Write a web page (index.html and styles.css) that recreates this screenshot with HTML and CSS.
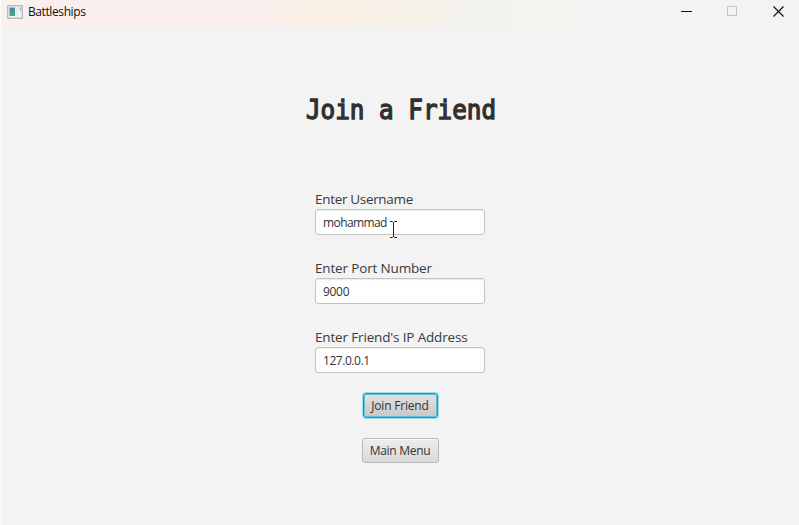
FILE: index.html
```
<!DOCTYPE html>
<html lang="en">
<head>
<meta charset="utf-8">
<title>Battleships</title>
<link rel="stylesheet" href="styles.css">
</head>
<body>
<div class="window">
  <header class="titlebar">
    <svg class="app-icon" width="16" height="14" viewBox="0 0 16 14">
      <defs><linearGradient id="g" x1="0" y1="0" x2="0" y2="1"><stop offset="0" stop-color="#4a87a8"/><stop offset="1" stop-color="#4fa583"/></linearGradient></defs>
      <rect x=".75" y=".75" width="14.5" height="12.5" fill="#f4f8f8" stroke="#aeb5ba" stroke-width="1.3"/>
      <rect x="2.5" y="2.5" width="5.5" height="8.5" fill="url(#g)"/>
      <rect x="8.5" y="2.5" width="3" height="9" fill="#e2ebed"/>
      <path d="M12 2.5h2v5z" fill="#8fc1bd"/>
    </svg>
    <span class="title">Battleships</span>
    <div class="controls">
      <svg width="11" height="11" viewBox="0 0 11 11"><path d="M0 5.5h11" stroke="#111"/></svg>
      <svg width="11" height="11" viewBox="0 0 11 11"><rect x=".5" y=".5" width="9" height="9" rx=".5" fill="none" stroke="#c4c4c4"/></svg>
      <svg width="11" height="11" viewBox="0 0 11 11"><path d="M.5.5l10 10M10.5.5l-10 10" stroke="#111" stroke-width="1.2"/></svg>
    </div>
  </header>
  <main class="content">
    <h1>Join a Friend</h1>
    <form class="form">
      <label class="field"><span class="l1">Enter Username</span><input type="text" class="i1" value="mohammad"></label>
      <label class="field"><span class="l2">Enter Port Number</span><input type="text" class="i2" value="9000"></label>
      <label class="field"><span class="l3">Enter Friend's IP Address</span><input type="text" class="i3" value="127.0.0.1"></label>
    </form>
    <button class="btn primary" type="button">Join Friend</button>
    <button class="btn" type="button">Main Menu</button>
  </main>
  <svg class="cursor" width="9" height="17" viewBox="0 0 9 17"><path d="M1 .5h2.5l1 1 1-1H8M4.5 1v15M1 16.5h2.5l1-1 1 1H8" fill="none" stroke="#222"/></svg>
</div>
</body>
</html>
```
FILE: styles.css
```
* { box-sizing: border-box; }
body { margin: 0; font-family: "Open Sans", "Noto Sans", sans-serif; }
.window {
  position: relative;
  width: 799px;
  height: 525px;
  overflow: hidden;
  background: #f3f3f3;
  border-left: 1px solid #fafafa;
  display: flex;
  flex-direction: column;
}
.titlebar {
  height: 27px;
  flex: none;
  display: flex;
  align-items: center;
  padding: 0 15px 4px 6px;
  background: linear-gradient(90deg, #faf0ee 0, #f9eeec 180px, #faf0ec 270px, #faf0e6 320px, #f8f2e8 400px, #f3f3ee 480px, #f3f3f3 640px);
}
.title { margin-left: 5px; font-size: 12px; line-height: 16px; letter-spacing: -0.4px; color: #111; }
.controls { margin-left: auto; display: flex; gap: 35px; }
.content { display: flex; flex-direction: column; align-items: center; }
h1 {
  margin: 67px 0 0 2px;
  font: normal 24.3px/32px "DejaVu Sans Mono", monospace;
  color: #303030;
  -webkit-text-stroke: 1.2px #303030;
  transform: scaleY(1.12);
}
.form { width: 170px; margin-top: 64px; display: flex; flex-direction: column; gap: 24px; }
.field { display: flex; flex-direction: column; white-space: nowrap; color: #3a3a3a; font-size: 13.5px; line-height: 19px; }
.field span { align-self: flex-start; }
.l1 { letter-spacing: -0.32px; }
.l2, .l3 { letter-spacing: -0.16px; }
.field input {
  width: 170px;
  height: 26px;
  padding: 0 7px;
  font: 12px "Open Sans", "Noto Sans", sans-serif;
  color: #333;
  border: 1px solid #c4c4c4;
  border-radius: 3px;
  background: #fff;
  box-shadow: inset 0 1px 1px #ececec;
  outline: none;
}
.field .i1 { letter-spacing: -0.6px; }
.field .i2 { letter-spacing: -0.3px; }
.field .i3 { letter-spacing: -0.45px; }
.btn {
  width: 77px;
  height: 25px;
  margin-top: 20px;
  padding: 0;
  font: 12px "Open Sans", "Noto Sans", sans-serif;
  letter-spacing: -0.3px;
  color: #333;
  border: 1px solid #b8b8b8;
  border-radius: 3px;
  background: linear-gradient(#ededed, #dadada);
  box-shadow: inset 0 1px #f8f8f8;
}
.primary {
  width: 75px;
  letter-spacing: -0.2px;
  border-color: #039ed3;
  background: linear-gradient(#e2e2e2, #c8c8c8);
  box-shadow: 0 0 0 1px #9edcf0, inset 0 0 0 1px #66bedb;
}
.cursor { position: absolute; left: 388px; top: 221px; }
```
